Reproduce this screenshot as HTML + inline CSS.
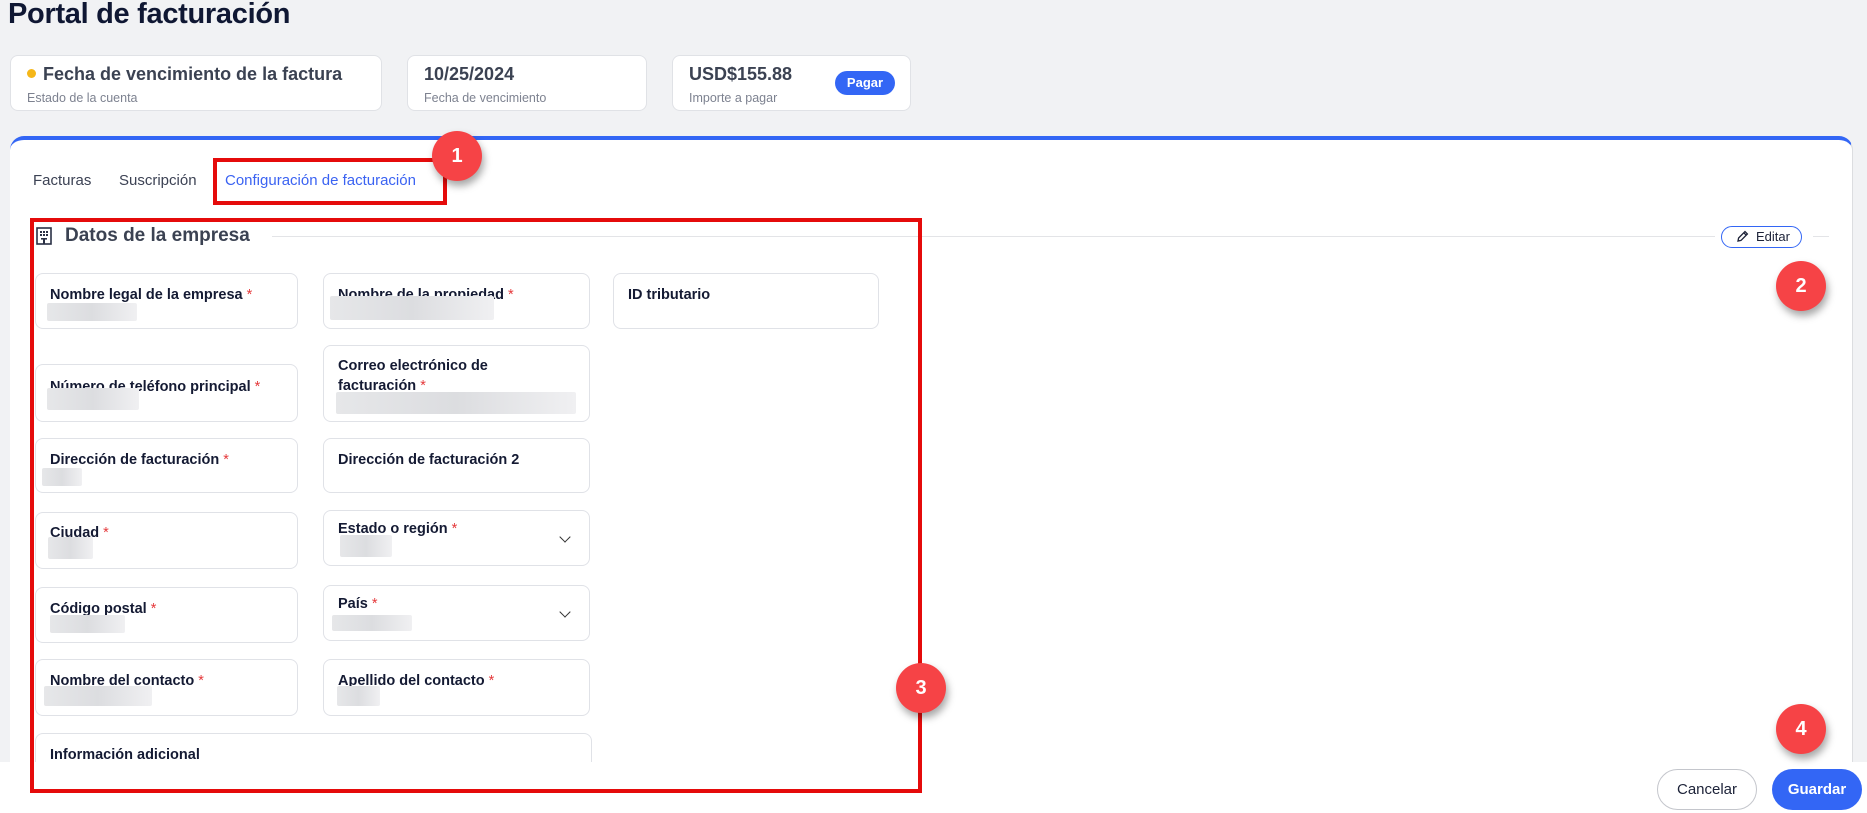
<!DOCTYPE html>
<html><head><meta charset="utf-8"><style>
*{box-sizing:border-box;margin:0;padding:0}
body{width:1867px;height:813px;background:#f1f2f4;font-family:"Liberation Sans",sans-serif;position:relative;overflow:hidden;color:#1c2238}
.abs{position:absolute}
h1{position:absolute;left:8px;top:-2px;font-size:29px;font-weight:600;color:#0f1733;letter-spacing:-0.3px}
.card{position:absolute;top:55px;height:56px;background:#fff;border:1.5px solid #e0e2e6;border-radius:8px;padding:8px 16px}
.card .t{font-size:18px;font-weight:600;color:#3b4252}
.card .s{font-size:12.5px;color:#7d8290;margin-top:6px}
.panel{position:absolute;left:10px;top:136px;width:1843px;height:640px;background:#fff;border-top:4px solid #3366f5;border-radius:14px 14px 0 0;border-right:1.5px solid #dcdde0}
.tab{position:absolute;top:172px;font-size:15px;color:#3c4254}
.red{position:absolute;border:4px solid #e50b0b}
.badge{position:absolute;width:50px;height:50px;border-radius:50%;background:#f64346;color:#fff;font-weight:700;font-size:20px;text-align:center;line-height:50px;box-shadow:2px 5px 8px rgba(0,0,0,.35)}
.f{position:absolute;background:#fff;border:1.5px solid #e0e2e7;border-radius:8px;padding:10px 14px}
.f .l{font-size:14.5px;font-weight:600;color:#141a33;line-height:22px}
.f .l b{color:#e5393b;font-weight:400}
.blur{position:absolute;height:18px;background:linear-gradient(90deg,#e6e7e9,#dcdde0 50%,#f0f0f2);border-radius:2px}
.chev{position:absolute;right:20px;top:50%;margin-top:-5px;width:8px;height:8px;border-right:1.8px solid #333;border-bottom:1.8px solid #333;transform:rotate(45deg)}
.footer{position:absolute;left:0;top:762px;width:1867px;height:51px;background:#fff}
.btn{position:absolute;height:41px;border-radius:21px;font-size:15px;text-align:center;line-height:39px}
</style></head><body>
<h1>Portal de facturación</h1>
<div class="card" style="left:10px;width:372px"><div class="t"><span style="display:inline-block;width:9px;height:9px;border-radius:50%;background:#f5b719;margin-right:7px;vertical-align:2px"></span>Fecha de vencimiento de la factura</div><div class="s">Estado de la cuenta</div></div>
<div class="card" style="left:407px;width:240px"><div class="t">10/25/2024</div><div class="s">Fecha de vencimiento</div></div>
<div class="card" style="left:672px;width:239px"><div class="t">USD$155.88</div><div class="s">Importe a pagar</div>
<div class="abs" style="left:162px;top:15px;width:60px;height:24px;border-radius:12px;background:#3366f5;color:#fff;font-size:13px;font-weight:700;text-align:center;line-height:24px">Pagar</div></div>
<div class="panel"></div>
<div class="tab" style="left:33px">Facturas</div>
<div class="tab" style="left:119px">Suscripción</div>
<div class="tab" style="left:225px;color:#3b63f2">Configuración de facturación</div>
<div class="red" style="left:213px;top:158px;width:234px;height:47px"></div>
<div class="badge" style="left:432px;top:131px">1</div>
<svg class="abs" style="left:36px;top:227px" width="16" height="18" viewBox="0 0 16 18"><rect x="1" y="1" width="14" height="16" fill="none" stroke="#2a3045" stroke-width="1.6"/><g fill="#2a3045"><rect x="4" y="4" width="2" height="2"/><rect x="7" y="4" width="2" height="2"/><rect x="10" y="4" width="2" height="2"/><rect x="4" y="7" width="2" height="2"/><rect x="7" y="7" width="2" height="2"/><rect x="10" y="7" width="2" height="2"/><rect x="7" y="11" width="2" height="6"/><rect x="5" y="11" width="6" height="1.6"/></g></svg>
<div class="abs" style="left:65px;top:225px;font-size:19px;font-weight:600;color:#3b4252">Datos de la empresa</div>
<div class="abs" style="left:272px;top:236px;width:1443px;height:1px;background:#e3e4e7"></div>
<div class="abs" style="left:1813px;top:236px;width:16px;height:1px;background:#e3e4e7"></div>
<div class="abs" style="left:1721px;top:226px;width:81px;height:22px;border:1.5px solid #3366f5;border-radius:11px;font-size:13px;line-height:19px;padding-left:34px;color:#1c2238">Editar
<svg class="abs" style="left:14px;top:3px" width="13" height="13" viewBox="0 0 13 13"><path d="M2 11l.6-3L9 1.6l2.4 2.4L5 10.4z M7.8 2.8l2.4 2.4" fill="none" stroke="#1c2238" stroke-width="1.3"/></svg></div>
<div class="badge" style="left:1776px;top:261px">2</div>

<div class="f" style="left:35px;top:273px;width:263px;height:56px"><div class="l">Nombre legal de la empresa <b>*</b></div></div>
<div class="blur" style="left:47px;top:303px;width:90px"></div>
<div class="f" style="left:323px;top:273px;width:267px;height:56px"><div class="l">Nombre de la propiedad <b>*</b></div></div>
<div class="blur" style="left:330px;top:296px;width:164px;height:24px"></div>
<div class="f" style="left:613px;top:273px;width:266px;height:56px"><div class="l">ID tributario</div></div>

<div class="f" style="left:35px;top:364px;width:263px;height:58px;padding-top:11px"><div class="l">Número de teléfono principal <b>*</b></div></div>
<div class="blur" style="left:47px;top:388px;width:92px;height:22px"></div>
<div class="f" style="left:323px;top:345px;width:267px;height:77px"><div class="l" style="line-height:20px">Correo electrónico de<br>facturación <b>*</b></div></div>
<div class="blur" style="left:336px;top:392px;width:240px;height:22px"></div>

<div class="f" style="left:35px;top:438px;width:263px;height:55px"><div class="l">Dirección de facturación <b>*</b></div></div>
<div class="blur" style="left:42px;top:468px;width:40px"></div>
<div class="f" style="left:323px;top:438px;width:267px;height:55px"><div class="l">Dirección de facturación 2</div></div>

<div class="f" style="left:35px;top:512px;width:263px;height:57px;padding-top:9px"><div class="l">Ciudad <b>*</b></div></div>
<div class="blur" style="left:48px;top:537px;width:45px;height:22px"></div>
<div class="f" style="left:323px;top:510px;width:267px;height:56px;padding-top:7px"><div class="l">Estado o región <b>*</b></div><div class="chev"></div></div>
<div class="blur" style="left:340px;top:535px;width:52px;height:22px"></div>

<div class="f" style="left:35px;top:587px;width:263px;height:56px"><div class="l">Código postal <b>*</b></div></div>
<div class="blur" style="left:50px;top:615px;width:75px"></div>
<div class="f" style="left:323px;top:585px;width:267px;height:56px;padding-top:7px"><div class="l">País <b>*</b></div><div class="chev"></div></div>
<div class="blur" style="left:332px;top:615px;width:80px;height:16px"></div>

<div class="f" style="left:35px;top:659px;width:263px;height:57px"><div class="l">Nombre del contacto <b>*</b></div></div>
<div class="blur" style="left:44px;top:686px;width:108px;height:20px"></div>
<div class="f" style="left:323px;top:659px;width:267px;height:57px"><div class="l">Apellido del contacto <b>*</b></div></div>
<div class="blur" style="left:337px;top:686px;width:43px;height:20px"></div>

<div class="f" style="left:35px;top:733px;width:557px;height:60px"><div class="l">Información adicional</div></div>

<div class="footer"></div>
<div class="red" style="left:30px;top:218px;width:892px;height:575px"></div>
<div class="badge" style="left:896px;top:663px">3</div>
<div class="badge" style="left:1776px;top:704px">4</div>
<div class="btn" style="left:1657px;top:769px;width:100px;border:1.5px solid #c4c6cc;background:#fff;color:#1c2238">Cancelar</div>
<div class="btn" style="left:1772px;top:769px;width:90px;background:#3366f5;color:#fff;font-weight:700;line-height:41px">Guardar</div>
</body></html>
